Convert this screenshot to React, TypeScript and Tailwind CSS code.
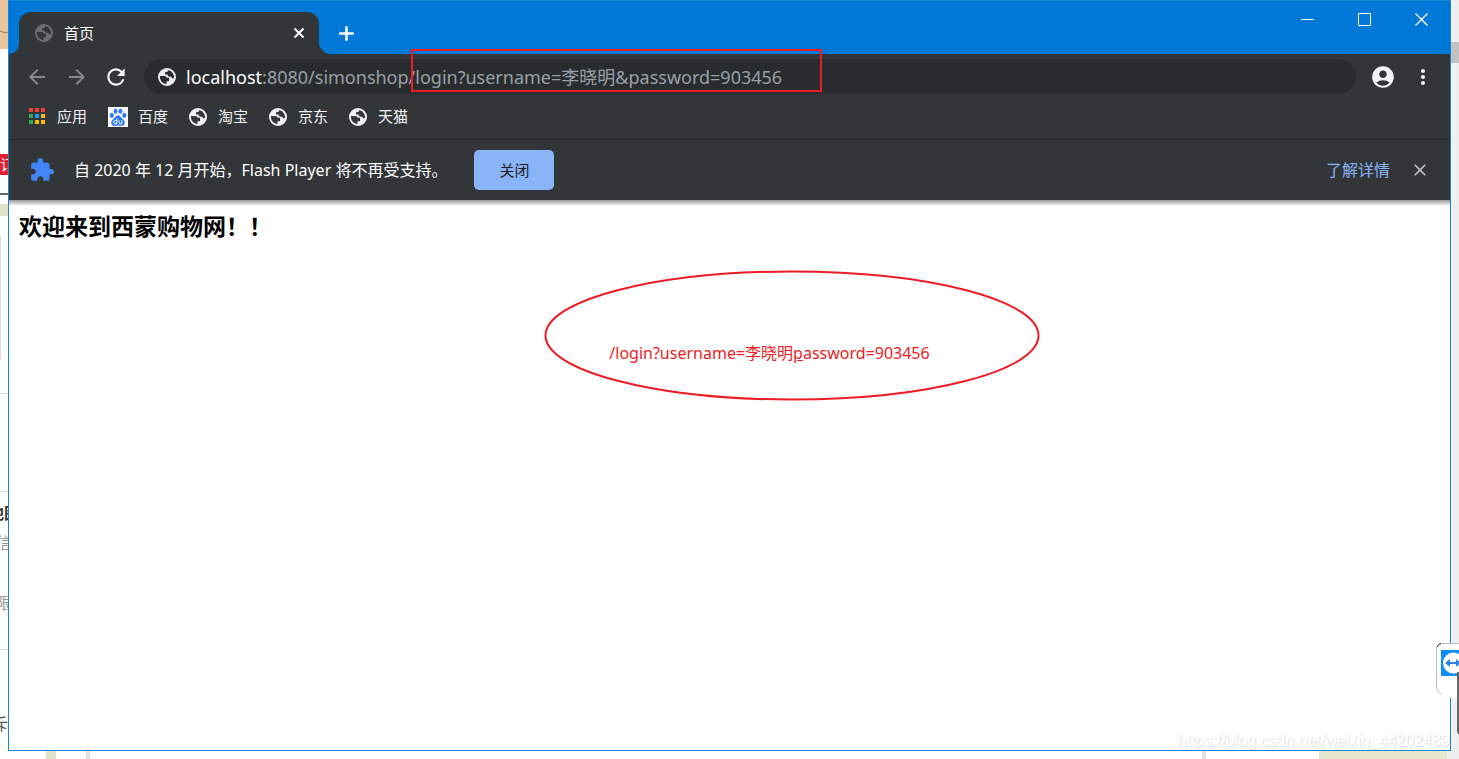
import type { ReactNode } from 'react';
import { MdAccountCircle, MdArrowBack, MdArrowForward, MdClose, MdExtension, MdMoreVert, MdRefresh } from 'react-icons/md';

const BOOKMARKS = ['淘宝', '京东', '天猫'];

const APP_DOTS = [
  '#ea4335', '#ea4335', '#ea4335',
  '#34a853', '#1a9cff', '#fbbc05',
  '#34a853', '#fbbc05', '#fbbc05',
];

function GlobeIcon({ className }: { className: string }) {
  return (
    <svg className={className} viewBox="0 0 18 18">
      <path
        fill="currentColor"
        fillRule="evenodd"
        d="M9 0a9 9 0 100 18A9 9 0 009 0zM2 8h4.200c1.500 0 2.300.7 2.500 1.800h2.400v2.600c0 .6-.4.900-1 .9H8.500V16C4.500 15.900 1.700 12.500 2 8zM10.700 2.200c-.9.300-1.300.9-1.100 1.700H8.200c-.7 0-1.100.4-1.100 1v1.700h2.400c.3 1.500 1 2.200 2.300 2.200h.9c.8 0 1.100.6 1.200 1.400h2c.6-3.700-1.700-7.100-5.200-8z"
      />
    </svg>
  );
}

function AppsIcon() {
  return (
    <svg className="h-[17px] w-[17px]" viewBox="0 0 17 17">
      {APP_DOTS.map((fill, i) => (
        <rect key={i} x={(i % 3) * 6} y={Math.floor(i / 3) * 6} width="4" height="4" fill={fill} />
      ))}
    </svg>
  );
}

function BaiduIcon() {
  return (
    <svg className="h-5 w-5" viewBox="0 0 20 20">
      <rect width="20" height="20" fill="#fff" />
      <g fill="#2f7df6">
        <ellipse cx="3.800" cy="8.300" rx="2" ry="2.600" />
        <ellipse cx="7.600" cy="4.200" rx="1.900" ry="2.600" />
        <ellipse cx="12.400" cy="4.200" rx="1.900" ry="2.600" />
        <ellipse cx="16.300" cy="8.300" rx="2" ry="2.600" />
        <path d="M10 8.200c1.800 0 2.500 1.500 3.700 2.800 1.300 1.300 3.100 2.200 3.100 4.700 0 2-1.400 3.200-3.200 3.200-1.300 0-2.200-.4-3.600-.4s-2.300.4-3.600.4c-1.800 0-3.200-1.200-3.200-3.200 0-2.500 1.800-3.400 3.100-4.700C7.500 9.700 8.200 8.200 10 8.200z" />
      </g>
      <path d="M8.800 11.500v5.300H7.400a1.600 1.600 0 010-3.300h1.400M11 13.300v2.200c0 .9.500 1.300 1.200 1.300h1.500v-3.500" fill="none" stroke="#fff" />
    </svg>
  );
}

function TabStrip() {
  return (
    <div className="flex h-[53px] items-end bg-[#0078d7]">
      <div className="h-[42px] w-2.5 bg-[#323639]">
        <div className="h-full rounded-br-xl bg-[#0078d7]" />
      </div>
      <div className="flex h-[42px] w-[300px] items-center rounded-t-xl bg-[#323639] px-4">
        <GlobeIcon className="h-[18px] w-[18px] text-[#6c7073]" />
        <span className="ml-[11px] flex-1 text-[15px] text-white">首页</span>
        <button aria-label="关闭标签页" className="-mr-1.5">
          <svg className="h-5 w-5" viewBox="0 0 20 20" stroke="#fff" strokeWidth="2">
            <path d="M5.500 5.500l9 9M14.500 5.500l-9 9" />
          </svg>
        </button>
      </div>
      <div className="h-[42px] w-3 bg-[#323639]">
        <div className="h-full rounded-bl-xl bg-[#0078d7]" />
      </div>
      <button aria-label="新标签页" className="flex h-[42px] items-center pl-2">
        <svg className="h-[15px] w-[15px]" viewBox="0 0 15 15" stroke="#fff" strokeWidth="2.500" strokeLinecap="round">
          <path d="M7.500 1.200v12.600M1.200 7.500h12.600" />
        </svg>
      </button>
      <div className="ml-auto flex gap-11 self-start pt-3 pr-[22px]">
        <WindowButton label="最小化">
          <path d="M0 6.500h13" />
        </WindowButton>
        <WindowButton label="最大化">
          <path d="M.5.5h12v12H.5z" />
        </WindowButton>
        <WindowButton label="关闭">
          <path d="M.5.5l12 12M12.500.5l-12 12" strokeWidth="1.300" />
        </WindowButton>
      </div>
    </div>
  );
}

function WindowButton({ label, children }: { label: string; children: ReactNode }) {
  return (
    <button aria-label={label}>
      <svg className="h-[13px] w-[13px]" viewBox="0 0 13 13" fill="none" stroke="#fff">
        {children}
      </svg>
    </button>
  );
}

function Toolbar() {
  return (
    <div className="flex items-center pt-[5px] pr-[15px] pl-4">
      <button aria-label="后退" className="text-[#87898c]">
        <MdArrowBack className="h-6 w-6" />
      </button>
      <button aria-label="前进" className="ml-4 text-[#87898c]">
        <MdArrowForward className="h-6 w-6" />
      </button>
      <button aria-label="重新加载" className="ml-3.5 text-[#f1f3f4]">
        <MdRefresh className="h-[26px] w-[26px]" />
      </button>
      <div className="relative ml-[15px] flex h-[35px] flex-1 items-center rounded-full bg-[#282c2f] pl-3.5">
        <GlobeIcon className="h-[18px] w-[18px] text-[#e8eaed]" />
        <div className="ml-2.5 text-lg leading-6 whitespace-nowrap text-[#9aa0a6]">
          <span className="text-white">localhost</span>:8080/simonshop/login?username=李晓明&amp;password=903456
        </div>
        {/* Red frame around the query string */}
        <div className="pointer-events-none absolute -top-2.5 left-[267px] h-[43px] w-[411px] border-2 border-[#ed1c24]" />
      </div>
      <button aria-label="用户" className="ml-3.5 text-[#f1f3f4]">
        <MdAccountCircle className="h-[26px] w-[26px]" />
      </button>
      <button aria-label="菜单" className="ml-[15px] text-[#f1f3f4]">
        <MdMoreVert className="h-6 w-6" />
      </button>
    </div>
  );
}

function BookmarksBar() {
  return (
    <nav className="flex h-[46px] items-center gap-[21px] border-b border-[#25282b] pl-5 text-[15px] text-[#f1f3f4]">
      <a href="#apps" className="flex items-center gap-[11px]">
        <AppsIcon />
        应用
      </a>
      <a href="#baidu" className="flex items-center gap-2.5">
        <BaiduIcon />
        百度
      </a>
      {BOOKMARKS.map((name) => (
        <a key={name} href="#bookmark" className="flex items-center gap-[11px]">
          <GlobeIcon className="h-[18px] w-[18px] text-[#f1f3f4]" />
          {name}
        </a>
      ))}
    </nav>
  );
}

function InfoBar() {
  return (
    <div className="flex h-[60px] items-center pr-5 pl-5 text-base">
      <MdExtension className="h-[26px] w-[26px] text-[#4285f4]" />
      <p className="ml-[19px] text-white">自 2020 年 12 月开始，Flash Player 将不再受支持。</p>
      <button className="ml-[27px] h-10 w-20 rounded-[5px] bg-[#8ab4f8] text-[15px] text-[#202124]">关闭</button>
      <a href="#details" className="ml-auto text-[#8ab4f8]">
        了解详情
      </a>
      <button aria-label="关闭提示" className="ml-5 text-[#bdbfc1]">
        <MdClose className="h-5 w-5" />
      </button>
    </div>
  );
}

function PageContent() {
  return (
    <main className="relative flex-1 overflow-hidden bg-white px-2.5 pt-2">
      <div className="absolute inset-x-0 top-0 h-1.5 bg-linear-to-b from-[#00000066] to-transparent" />
      <h1 className="text-[23px] leading-9 font-bold text-black">欢迎来到西蒙购物网！！</h1>
      <p className="mt-[97px] pl-20 text-center text-base leading-6 text-[#ed1c24]">
        /login?username=李晓明<span className="underline">p</span>assword=903456
      </p>
      <svg className="pointer-events-none absolute top-[70px] left-[535px] h-[131px] w-[496px]" viewBox="0 0 496 131" fill="none">
        <ellipse cx="248" cy="65.500" rx="246.500" ry="64" stroke="#ed1c24" strokeWidth="2" />
      </svg>
      <span className="absolute right-0 -bottom-px font-['Liberation_Sans',sans-serif] text-base leading-5 text-white [text-shadow:1px_1px_1px_#00000026]">
        https://blog.csdn.net/weixin_44202489
      </span>
    </main>
  );
}

// Sliver of the page that sits behind the window
function LeftEdge() {
  return (
    <aside className="flex w-2 flex-col overflow-hidden whitespace-nowrap">
      <svg className="h-[49px] w-2 shrink-0 bg-[#ebc39c]" viewBox="0 0 8 49">
        <path d="M0 31l5 2 3-1" fill="none" stroke="#a5764f" />
      </svg>
      <div className="mt-[105px] flex h-[21px] shrink-0 bg-[#e6202e] text-[15px] leading-5 text-white">订</div>
      <div className="mt-[18px] h-0.5 shrink-0 bg-[#666]" />
      <div className="mt-[9px] h-3 shrink-0 bg-[#e2e5cb]" />
      <div className="mt-5 h-[123px] w-px shrink-0 bg-[#d8d8d8]" />
      <div className="mt-[34px] h-px shrink-0 bg-[#ddd]" />
      <div className="mt-[97px] h-px shrink-0 bg-[#ddd]" />
      <div className="mt-[9px] flex h-6 shrink-0 justify-center text-base font-bold text-[#333]">地图</div>
      <div className="mt-1.5 flex h-6 shrink-0 justify-center text-base text-[#999]">信</div>
      <div className="mt-9 flex h-6 shrink-0 justify-center text-base text-[#999]">限</div>
      <div className="mt-[34px] h-px shrink-0 bg-[#ddd]" />
      <div className="mt-[62px] flex h-6 shrink-0 justify-end text-base text-[#555]">斥</div>
    </aside>
  );
}

function RightEdge() {
  return (
    <aside className="w-2 bg-[#f0f0f0] pt-[42px]">
      <div className="h-[21px] bg-[#c1c1c1]" />
    </aside>
  );
}

function RemotePanel() {
  return (
    <svg className="absolute right-0 bottom-6 h-[92px] w-[23px]" viewBox="0 0 23 92" fill="none">
      <path d="M24 .5H6Q1 1 .5 6v38c0 6 8 9 15 11h9z" fill="#fff" />
      <path d="M24 .5H6Q1 1 .5 6v38q0 4 5 7" stroke="#b8bcc8" />
      <path d="M1 4Q2 1 5 .5" stroke="#333" />
      <rect x="5" y="7" width="19" height="26" fill="#0d8dfa" />
      <circle cx="17.500" cy="20" r="10.500" fill="#fff" />
      <path d="M9 20l5-4v3h6v-3l5 4-5 4v-3h-6v3z" fill="#2f80df" />
      <path d="M24 30h-2v58q0 3 3 3" stroke="#666" strokeWidth="2" />
    </svg>
  );
}

export default function App() {
  return (
    <div className="relative flex min-h-screen flex-col overflow-hidden bg-white font-['Noto_Sans','Noto_Sans_CJK_SC',sans-serif]">
      <div className="flex flex-1">
        <LeftEdge />
        <div className="flex flex-1 flex-col border border-[#1883d7]">
          <header className="bg-[#323639]">
            <TabStrip />
            <Toolbar />
            <BookmarksBar />
            <InfoBar />
          </header>
          <PageContent />
        </div>
        <RightEdge />
      </div>
      <div className="flex h-2">
        <div className="ml-[46px] w-2.5 bg-[#e2e5cb]" />
        <div className="ml-[30px] w-1 bg-[#dfe2e8]" />
        <div className="ml-auto w-1 bg-[#dfe2e8]" />
        <div className="ml-[113px] w-32 bg-[#e5e8cf]" />
        <div className="w-3 bg-[#f0f0f0]" />
      </div>
      <RemotePanel />
    </div>
  );
}
